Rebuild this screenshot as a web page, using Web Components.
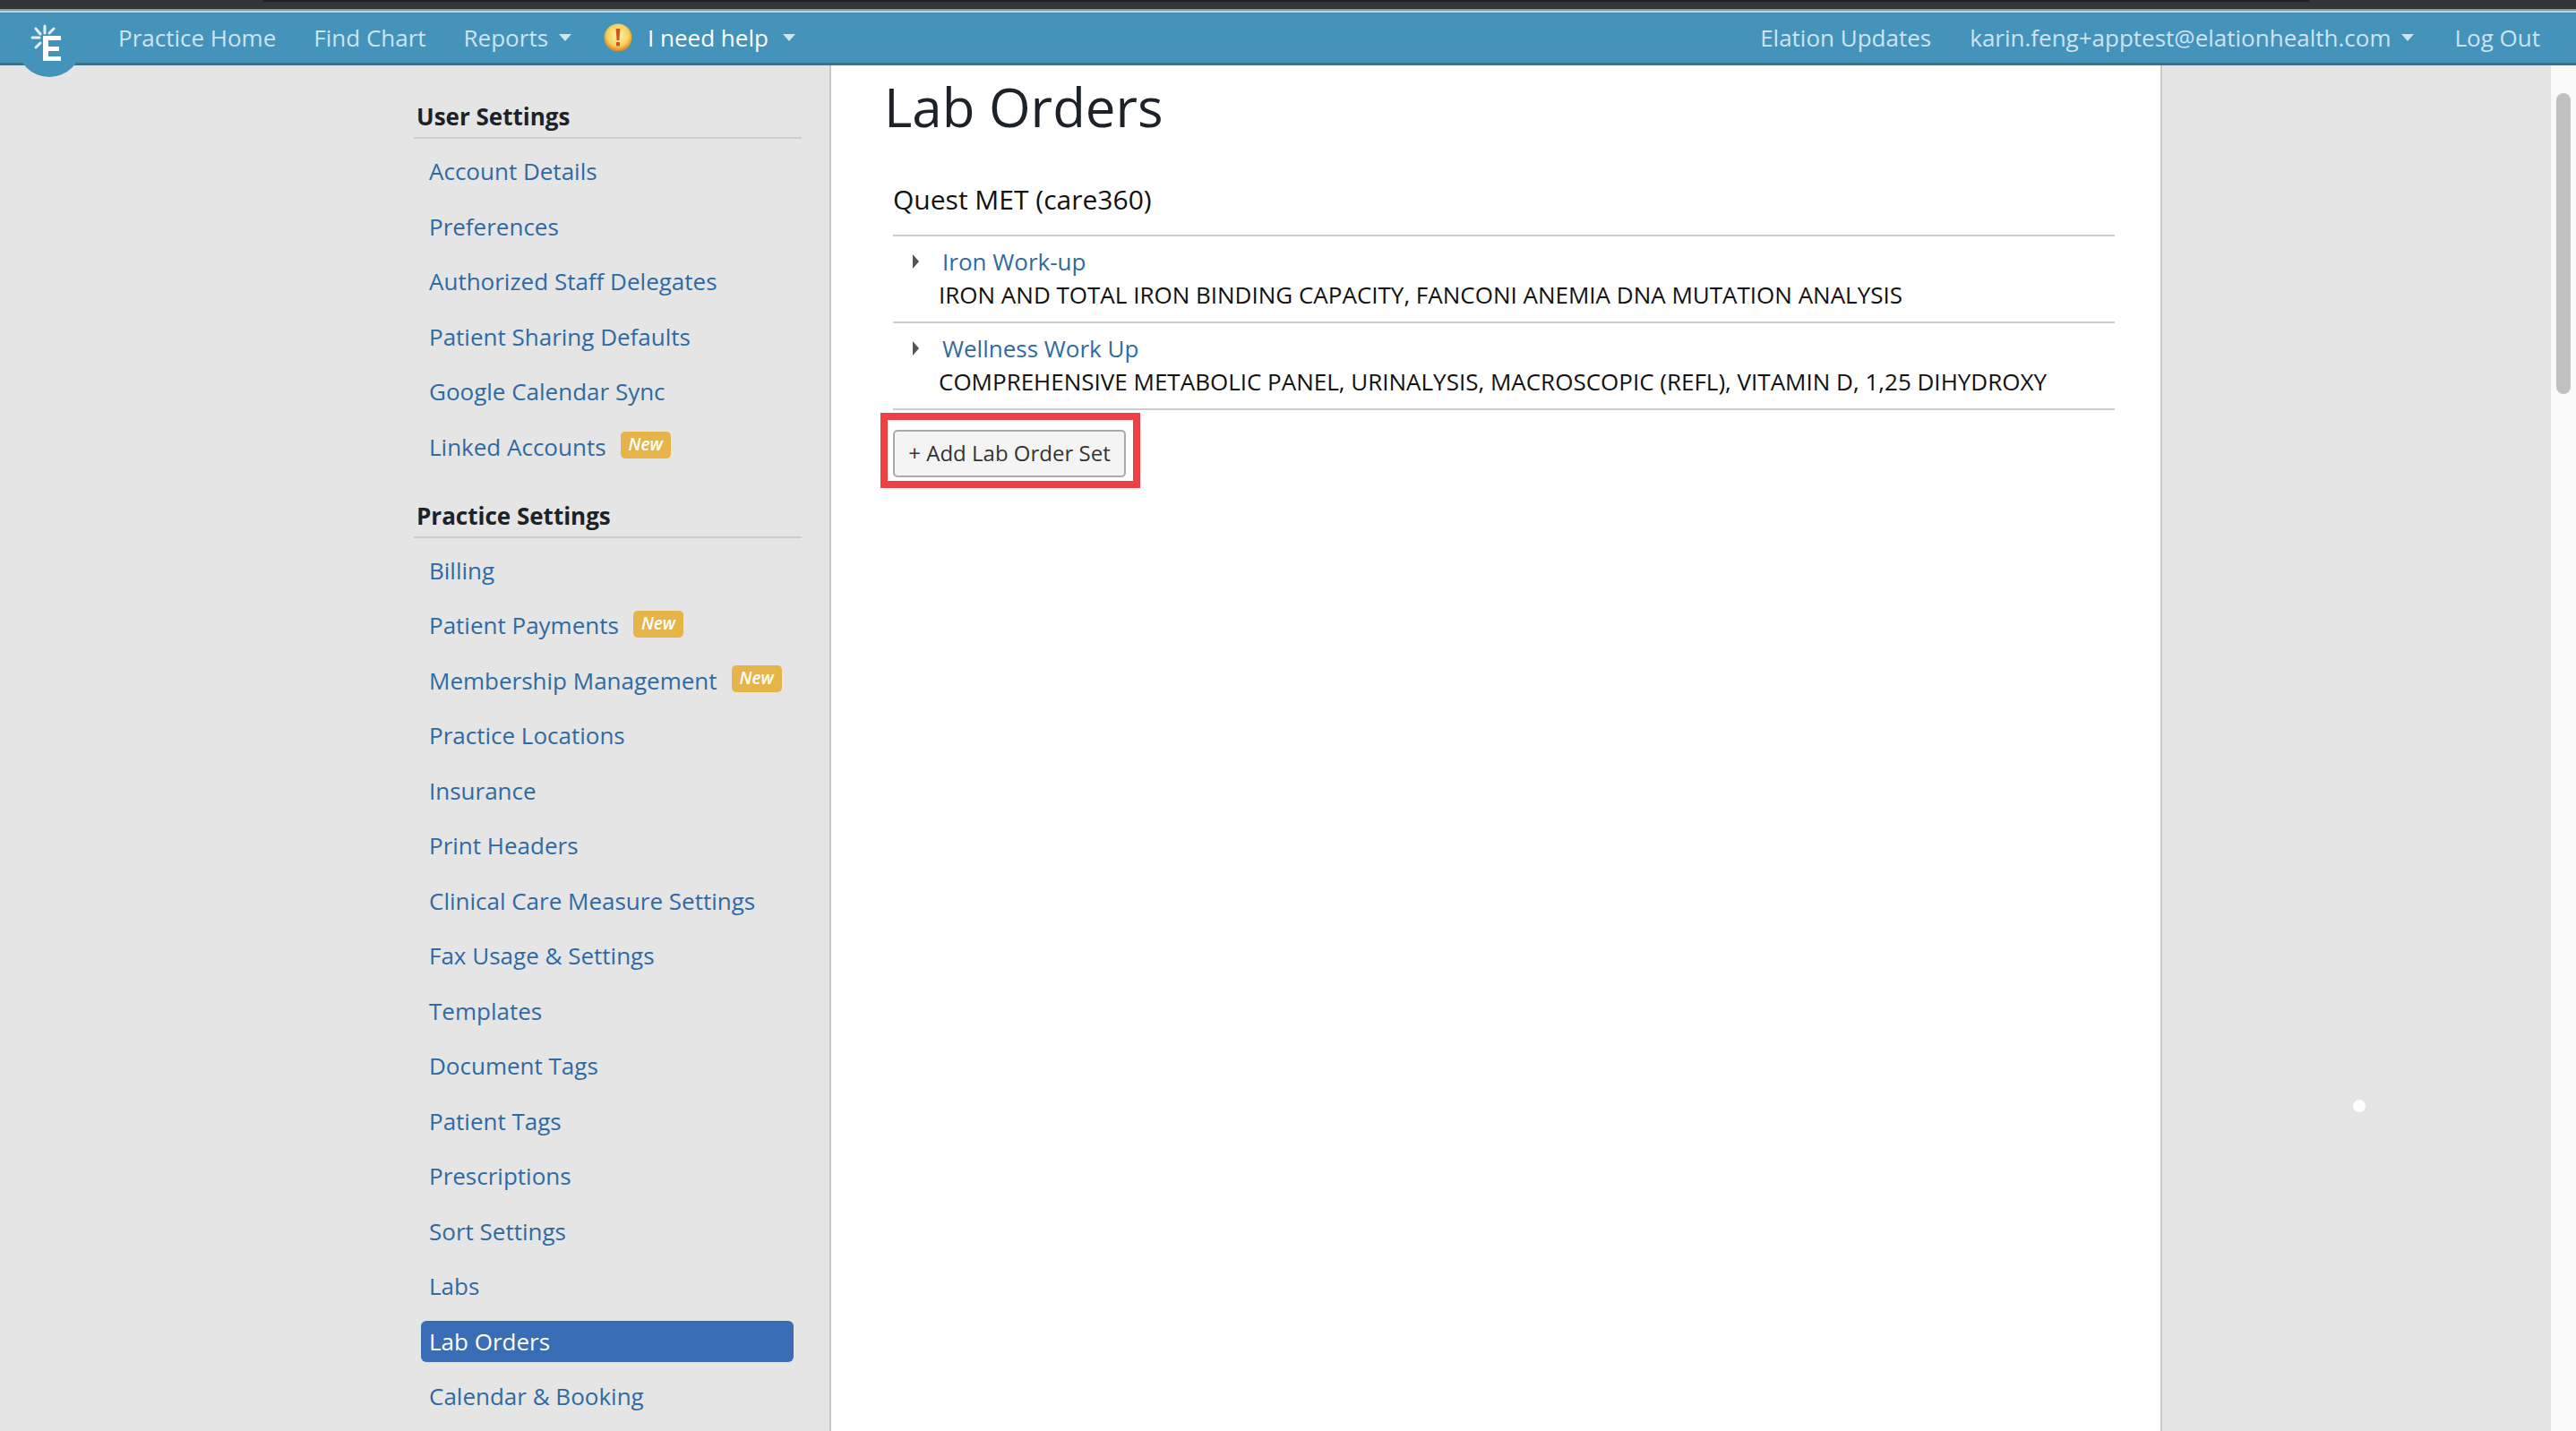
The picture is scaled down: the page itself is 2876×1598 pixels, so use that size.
<!DOCTYPE html>
<html>
<head>
<meta charset="utf-8">
<title>Lab Orders</title>
<style>
  html, body { margin: 0; height: 100%; overflow: hidden; background: #e5e5e5; }
  body { font-family: "Open Sans", sans-serif; }
</style>
</head>
<body>
<app-shell>
  <top-nav slot="nav"></top-nav>
  <settings-sidebar slot="sidebar">
    <nav-group title="User Settings">
      <nav-link>Account Details</nav-link>
      <nav-link>Preferences</nav-link>
      <nav-link>Authorized Staff Delegates</nav-link>
      <nav-link>Patient Sharing Defaults</nav-link>
      <nav-link>Google Calendar Sync</nav-link>
      <nav-link badge>Linked Accounts</nav-link>
    </nav-group>
    <nav-group title="Practice Settings">
      <nav-link>Billing</nav-link>
      <nav-link badge>Patient Payments</nav-link>
      <nav-link badge>Membership Management</nav-link>
      <nav-link>Practice Locations</nav-link>
      <nav-link>Insurance</nav-link>
      <nav-link>Print Headers</nav-link>
      <nav-link>Clinical Care Measure Settings</nav-link>
      <nav-link>Fax Usage &amp; Settings</nav-link>
      <nav-link>Templates</nav-link>
      <nav-link>Document Tags</nav-link>
      <nav-link>Patient Tags</nav-link>
      <nav-link>Prescriptions</nav-link>
      <nav-link>Sort Settings</nav-link>
      <nav-link>Labs</nav-link>
      <nav-link active>Lab Orders</nav-link>
      <nav-link>Calendar &amp; Booking</nav-link>
    </nav-group>
  </settings-sidebar>
  <lab-orders-page slot="main">
    <lab-set name="Iron Work-up">IRON AND TOTAL IRON BINDING CAPACITY, FANCONI ANEMIA DNA MUTATION ANALYSIS</lab-set>
    <lab-set name="Wellness Work Up">COMPREHENSIVE METABOLIC PANEL, URINALYSIS, MACROSCOPIC (REFL), VITAMIN D, 1,25 DIHYDROXY</lab-set>
  </lab-orders-page>
</app-shell>

<script>
  class AppShell extends HTMLElement {
    constructor() {
      super();
      this.attachShadow({ mode: 'open' });
      this.shadowRoot.innerHTML = `
        <style>
          :host { display: flex; flex-direction: column; height: 1598px; overflow: hidden; position: relative; }
          .chrome { height: 10px; background: #343539; flex: none; position: relative; }
          .chrome i { position: absolute; left: 294px; width: 2284px; top: 0; height: 2px; background: #1f2023; }
          .edge { height: 2px; background: #8f979a; flex: none; }
          .body { flex: 1; display: flex; min-height: 0; }
          .left { width: 926px; flex: none; border-right: 2px solid #c8c8c8; background: #e5e5e5; overflow: hidden; }
          .mid { width: 1484px; flex: none; background: #fff; overflow: hidden; }
          .right { flex: 1; border-left: 2px solid #c8c8c8; background: #e5e5e5; position: relative; }
          .dot { position: absolute; left: 213px; top: 1155px; width: 14px; height: 14px; border-radius: 50%; background: #fff; }
          .track { width: 28px; flex: none; background: #f9f9f9; position: relative; }
          .thumb { position: absolute; left: 6px; top: 31px; width: 16px; height: 336px; border-radius: 8px; background: #c1c1c1; }
        </style>
        <div class="chrome"><i></i></div>
        <div class="edge"></div>
        <slot name="nav"></slot>
        <div class="body">
          <div class="left"><slot name="sidebar"></slot></div>
          <div class="mid"><slot name="main"></slot></div>
          <div class="right"><div class="dot"></div></div>
          <div class="track"><div class="thumb"></div></div>
        </div>
      `;
    }
  }

  class TopNav extends HTMLElement {
    constructor() {
      super();
      this.attachShadow({ mode: 'open' });
      const caret = '<svg class="caret" width="14" height="8" viewBox="0 0 14 8"><path d="M0 0h14L7 8z" fill="currentColor"/></svg>';
      this.shadowRoot.innerHTML = `
        <style>
          :host { display: flex; align-items: center; height: 56px; flex: none; position: relative; z-index: 2;
                  background: #4493bb; border-top: 2px solid #b9d6e4; border-bottom: 3px solid #3c6f88;
                  font-size: 26px; color: #cde4f0; padding: 0 40px 0 132px; white-space: nowrap; }
          .logo { position: absolute; left: 19px; top: 0; width: 72px; height: 72px; border-radius: 50%; background: #4493bb; z-index: -1; }
          .logo svg { position: absolute; left: 0; top: 0; }
          .item { display: inline-flex; align-items: center; }
          .caret { margin-left: 12px; }
          .help { color: #fff; }
          .help .caret { margin-left: 16px; color: #cde4f0; }
          .warn { margin-right: 17px; }
          .l1 { margin-left: 42px; }
          .l2 { margin-left: 42px; }
          .l3 { margin-left: 36px; }
          .spacer { flex: 1; }
          .r1 { margin-left: 43px; }
          .r2 { margin-left: 45px; }
        </style>
        <div class="logo">
          <svg width="72" height="72" viewBox="0 0 72 72">
            <path d="M29 26h20v5H35v7h12v5H35v6h14v5H29z" fill="#fff"/>
            <g stroke="#e4f1f7" stroke-width="3" stroke-linecap="round" fill="none">
              <path d="M31 15v8"/>
              <path d="M21 18l5 6"/>
              <path d="M17 28h8"/>
              <path d="M21 39l5-5"/>
              <path d="M41 18l-5 5"/>
            </g>
          </svg>
        </div>
        <span class="item">Practice Home</span>
        <span class="item l1">Find Chart</span>
        <span class="item l2">Reports${caret}</span>
        <span class="item l3 help">
          <svg class="warn" width="32" height="32" viewBox="0 0 32 32">
            <defs><radialGradient id="w" cx="50%" cy="42%" r="55%"><stop offset="0" stop-color="#fff3b0"/><stop offset=".7" stop-color="#f7d25a"/><stop offset="1" stop-color="#dd8a2c"/></radialGradient></defs>
            <circle cx="16" cy="16" r="15.5" fill="url(#w)"/>
            <path d="M13.6 6h4.8l-1 13h-2.8z" fill="#d2521f"/>
            <rect x="14" y="21" width="4" height="4.5" rx="1" fill="#d2521f"/>
          </svg>
          I need help${caret}
        </span>
        <span class="spacer"></span>
        <span class="item">Elation Updates</span>
        <span class="item r1">karin.feng+apptest@elationhealth.com${caret}</span>
        <span class="item r2">Log Out</span>
      `;
    }
  }

  class SettingsSidebar extends HTMLElement {
    constructor() {
      super();
      this.attachShadow({ mode: 'open' });
      this.shadowRoot.innerHTML = `
        <style>
          :host { display: flex; flex-direction: column; gap: 36px; padding: 39px 31px 0 462px; }
        </style>
        <slot></slot>
      `;
    }
  }

  class NavGroup extends HTMLElement {
    constructor() {
      super();
      this.attachShadow({ mode: 'open' });
      this.shadowRoot.innerHTML = `
        <style>
          :host { display: block; }
          h3 { margin: 0 0 13px; padding: 0 0 5px 3px; height: 36px; line-height: 36px; font-size: 26px; font-weight: 700; color: #1d2229; border-bottom: 2px solid #cccccc; }
          .list { display: flex; flex-direction: column; gap: 15.5px; }
        </style>
        <h3></h3>
        <div class="list"><slot></slot></div>
      `;
      this.shadowRoot.querySelector('h3').textContent = this.getAttribute('title');
      this.removeAttribute('title');
    }
  }

  class NavLink extends HTMLElement {
    constructor() {
      super();
      this.attachShadow({ mode: 'open' });
      const badge = this.hasAttribute('badge') ? '<span class="badge">New</span>' : '';
      this.shadowRoot.innerHTML = `
        <style>
          :host { display: flex; align-items: center; height: 46px; margin: 0 9px 0 8px; padding: 0 9px; box-sizing: border-box;
                  font-size: 26px; color: #2f6aa3; border-radius: 6px; white-space: nowrap; }
          :host([active]) { background: #396db5; color: #fff; }
          .badge { margin: -3px 0 0 16px; background: #e6b449; color: #fff; font-size: 19px; font-weight: 600; font-style: italic;
                   height: 30px; line-height: 29px; padding: 0 9px; border-radius: 5px; }
        </style>
        <slot></slot>${badge}
      `;
    }
  }

  class LabOrdersPage extends HTMLElement {
    constructor() {
      super();
      this.attachShadow({ mode: 'open' });
      this.shadowRoot.innerHTML = `
        <style>
          :host { display: block; padding: 0 51px 0 62px; color: #111; }
          h1 { margin: 0 0 0 -3px; padding-top: 3px; font-size: 60px; font-weight: 400; line-height: 86px; color: #1d2229; }
          h2 { margin: 39.5px 0 0 7px; padding-bottom: 19px; font-size: 30px; line-height: 41px; font-weight: 400; color: #111; border-bottom: 2px solid #ccc; }
          .list { margin-left: 7px; }
          .actions { margin: 3px 0 0 -7px; border: 8px solid #ef4044; width: fit-content; padding: 11px 8px 4px 6px; }
          button { display: block; width: 260px; height: 53px; padding: 0 0 2px; font: 400 24px "Open Sans", sans-serif; color: #333;
                   background: #f4f4f4; border: 2px solid #aaa; border-radius: 5px; }
        </style>
        <h1>Lab Orders</h1>
        <h2>Quest MET (care360)</h2>
        <div class="list"><slot></slot></div>
        <div class="actions"><button>+ Add Lab Order Set</button></div>
      `;
    }
  }

  class LabSet extends HTMLElement {
    constructor() {
      super();
      this.attachShadow({ mode: 'open' });
      this.shadowRoot.innerHTML = `
        <style>
          :host { display: block; height: 95px; border-bottom: 2px solid #ccc; font-size: 26px; color: #111; }
          .head { display: flex; align-items: center; height: 38px; padding-top: 9px; }
          svg { margin-left: 22px; }
          a { margin-left: 26px; color: #2f6aa3; }
          .tests { margin-left: 51px; line-height: 37px; white-space: nowrap; }
        </style>
        <div class="head">
          <svg width="7" height="16" viewBox="0 0 7 16"><path d="M0 0l7 8-7 8z" fill="#555"/></svg>
          <a></a>
        </div>
        <div class="tests"><slot></slot></div>
      `;
      this.shadowRoot.querySelector('a').textContent = this.getAttribute('name');
    }
  }

  customElements.define('app-shell', AppShell);
  customElements.define('top-nav', TopNav);
  customElements.define('settings-sidebar', SettingsSidebar);
  customElements.define('nav-group', NavGroup);
  customElements.define('nav-link', NavLink);
  customElements.define('lab-orders-page', LabOrdersPage);
  customElements.define('lab-set', LabSet);
</script>
</body>
</html>
